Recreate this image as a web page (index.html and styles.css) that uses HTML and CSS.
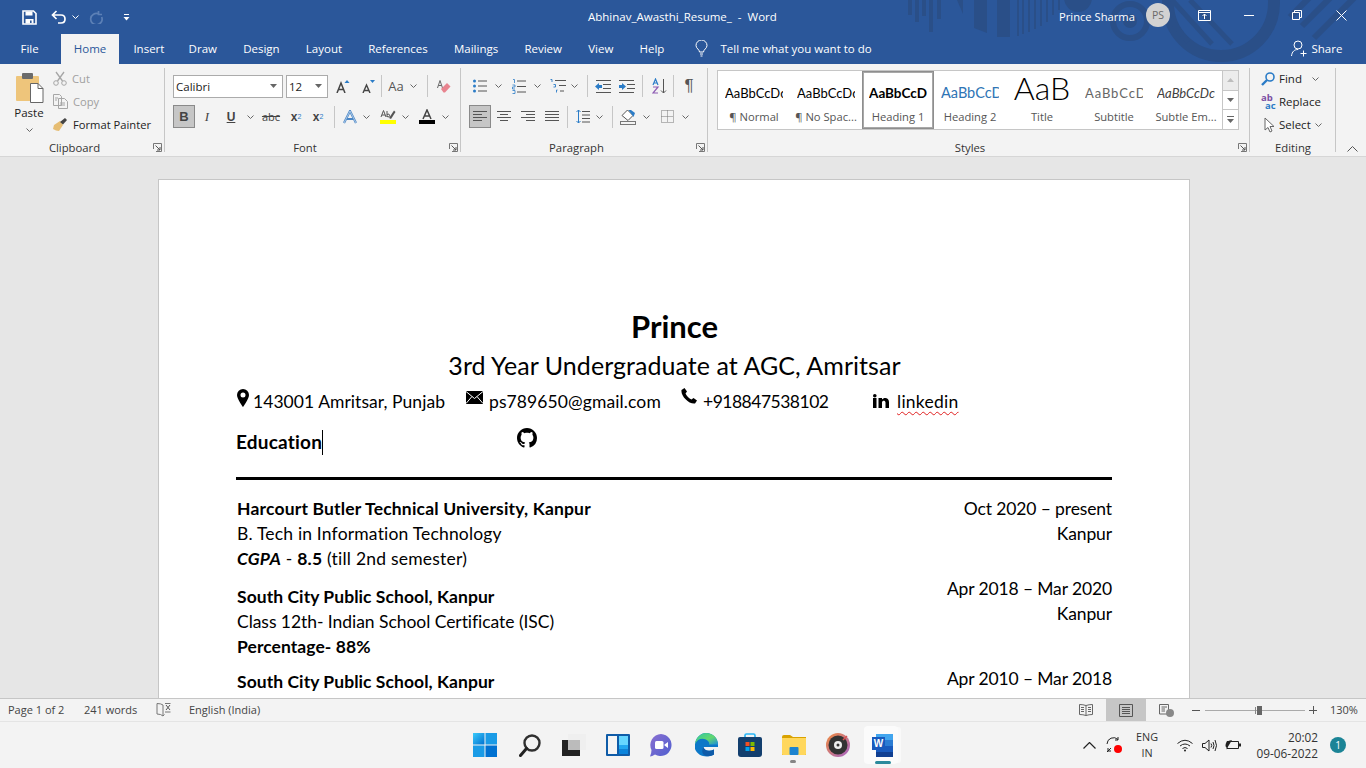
FILE: index.html
```html
<!DOCTYPE html>
<html lang="en">
<head>
<meta charset="utf-8">
<title>Abhinav_Awasthi_Resume_ - Word</title>
<link rel="stylesheet" href="styles.css">
</head>
<body>
<svg class="defs" width="0" height="0">
  <defs>
    <symbol id="chev" viewBox="0 0 7 4"><path d="M.5.5 3.5 3.5 6.5.5" fill="none" stroke="#666" stroke-width="1"/></symbol>
    <symbol id="launch" viewBox="0 0 9 9"><path d="M.5 6V.5H8.5V8.5H3" fill="none" stroke="#777"/><path d="M2.5 2.5 7 7M7 4V7H4" fill="none" stroke="#555"/></symbol>
    <linearGradient id="winG" x1="0" y1="0" x2="1" y2="1"><stop offset="0" stop-color="#3bcbfb"/><stop offset="1" stop-color="#0071d1"/></linearGradient>
    <linearGradient id="edgeG" x1="0" y1="0" x2="1" y2="1"><stop offset="0" stop-color="#2fc7a5"/><stop offset=".55" stop-color="#63d86f"/><stop offset="1" stop-color="#1d8ed8"/></linearGradient>
    <linearGradient id="chatG" x1="0" y1="0" x2="1" y2="1"><stop offset="0" stop-color="#8a6fd1"/><stop offset="1" stop-color="#4f5fcf"/></linearGradient>
    <linearGradient id="discG" x1="0" y1="0" x2="1" y2="1"><stop offset="0" stop-color="#f08a3c"/><stop offset="1" stop-color="#a565c9"/></linearGradient>
  </defs>
</svg>

<header class="titlebar">
  <svg class="pattern" width="1366" height="64" viewBox="0 0 1366 64">
    <g fill="#2a4f88">
      <rect x="908" width="4" height="15"/><rect x="915" width="4" height="22"/><rect x="922" width="4" height="16"/><rect x="929" width="4" height="32"/><rect x="937" width="4" height="19"/>
      <path d="M957 0H963V14Z"/><path d="M974 0H987V33L974 28Z"/><rect x="997" width="13" height="37"/>
      <rect x="1017" width="2" height="36"/><rect x="1022" width="2" height="34"/><rect x="1028" width="2" height="32"/><rect x="1034" width="2" height="29"/><rect x="1040" width="2" height="26"/><rect x="1046" width="2" height="22"/><rect x="1052" width="2" height="15"/><rect x="1058" width="2" height="10"/>
      <circle cx="1078" cy="-2" r="14"/><circle cx="1130" cy="21" r="7"/>
    </g>
    <g fill="none" stroke="#2a4f88">
      <circle cx="1130" cy="21" r="17" stroke-width="6"/>
      <circle cx="1221" cy="3" r="53" stroke-width="12"/>
      <path d="M1172 0 1212 44M1164 12 1188 42M1190 0 1232 44" stroke-width="5"/>
      <path d="M1290 17 1312 -5M1302 26 1338 -10M1314 38 1366 -14" stroke-width="6"/>
    </g>
  </svg>
  <div class="titlerow">
    <div class="qat">
      <svg class="q-save" width="15" height="15" viewBox="0 0 15 15"><path d="M1 1H11.5L14 3.5V14H1Z" fill="none" stroke="#fff" stroke-width="1.6"/><path d="M3.5 1.5H10.5V5.5H3.500ZM3.500 9H11.500V13.500H3.500Z" fill="#fff"/><rect x="8" y="10.500" width="1.600" height="2.500" fill="#2b579a"/></svg>
      <svg class="q-undo" width="15" height="14" viewBox="0 0 15 14"><path d="M5.500 1 1.500 5 5.500 9M1.500 5H10Q14 5 14 9T10 13H7" fill="none" stroke="#fff" stroke-width="1.700"/></svg>
      <svg class="q-chev" width="7" height="4"><use href="#chev"/></svg>
      <svg class="q-redo" width="14" height="14" viewBox="0 0 14 14"><path d="M9.500 1 9.500 4.500 13 4.500M9.500 3.800A5.700 5.700 0 1 0 12.700 7" fill="none" stroke="#5c80b6" stroke-width="1.700"/></svg>
      <svg class="q-more" width="7" height="7" viewBox="0 0 7 7"><path d="M1 .5H6" stroke="#fff"/><path d="M.5 3H6.500L3.500 6.500Z" fill="#fff"/></svg>
    </div>
    <div class="doctitle">Abhinav_Awasthi_Resume_&nbsp; -&nbsp; Word</div>
    <div class="account">
      <span class="username">Prince Sharma</span>
      <span class="avatar">PS</span>
      <svg class="win-ribbon" width="13" height="11" viewBox="0 0 13 11"><path d="M.5 .5H12.500V10.500H.500ZM.5 2.500H12.500" fill="none" stroke="#fff"/><path d="M6.500 9V4M4.500 6 6.500 4 8.500 6" fill="none" stroke="#fff"/></svg>
      <svg class="win-min" width="10" height="1"><rect width="10" height="1" fill="#fff"/></svg>
      <svg class="win-max" width="10" height="10" viewBox="0 0 10 10"><path d="M.5 2.500H7.500V9.500H.500ZM2.500 2.500V.5H9.500V7.500H7.500" fill="none" stroke="#fff"/></svg>
      <svg class="win-close" width="11" height="11" viewBox="0 0 11 11"><path d="M.5 .5 10.500 10.500M10.500 .5 .5 10.500" stroke="#fff"/></svg>
    </div>
  </div>
  <nav class="tabs">
    <span class="tab tab-file">File</span>
    <span class="tab tab-on">Home</span>
    <span class="tab tab-insert">Insert</span>
    <span class="tab">Draw</span>
    <span class="tab">Design</span>
    <span class="tab">Layout</span>
    <span class="tab">References</span>
    <span class="tab">Mailings</span>
    <span class="tab">Review</span>
    <span class="tab">View</span>
    <span class="tab">Help</span>
    <svg class="bulb" width="13" height="17" viewBox="0 0 13 17"><path d="M4.500 12C4.500 9.500 1 8.500 1 5.500A5.500 5.500 0 0 1 12 5.500C12 8.500 8.500 9.500 8.500 12ZM5 14H8M5.500 16H7.500" fill="none" stroke="#fff"/></svg>
    <span class="tellme">Tell me what you want to do</span>
    <span class="share">
      <svg width="16" height="17" viewBox="0 0 16 17"><circle cx="7" cy="5" r="4" fill="none" stroke="#fff"/><path d="M.5 16C1 11.500 3.500 9.500 7 9.500M9.500 13.500H15.500M12.500 10.500V16.500" fill="none" stroke="#fff"/></svg>
      Share
    </span>
  </nav>
</header>

<section class="ribbon">
  <div class="group g-clip">
    <div class="clipbody">
      <div class="paste">
        <svg width="29" height="31" viewBox="0 0 29 31"><rect x="1" y="4" width="23" height="25" rx="1" fill="#eec57b"/><rect x="7" y="1" width="11" height="6" rx="1" fill="#6b6b6b"/><path d="M15.500 11.500H23L28 16.500V30.500H15.500Z" fill="#fff" stroke="#666"/><path d="M23 11.500V16.500H28" fill="none" stroke="#666"/></svg>
        <span class="pastelabel">Paste</span>
        <svg width="7" height="4"><use href="#chev"/></svg>
      </div>
      <div class="cliplist">
        <div class="tool off">
          <svg class="tic" width="14" height="15" viewBox="0 0 14 15"><path d="M3 1 9.500 10M11 1 4.500 10" fill="none" stroke="#a6a6a6" stroke-width="1.300"/><circle cx="3" cy="12" r="2.300" fill="none" stroke="#a6a6a6"/><circle cx="11" cy="12" r="2.300" fill="none" stroke="#a6a6a6"/></svg>
          Cut
        </div>
        <div class="tool off">
          <svg class="tic" width="15" height="15" viewBox="0 0 15 15"><path d="M.5 .5H6.500L8.500 2.500V11.500H.500ZM5.500 4.500H11.500L14.500 7.500V14.500H5.500ZM2 4H5M2 6H4M7 9H12M7 11H12" fill="none" stroke="#a6a6a6"/></svg>
          Copy
        </div>
        <div class="tool">
          <svg class="tic" width="15" height="15" viewBox="0 0 15 15"><path d="M1 8 7 4 10 8 6 14Q3 14 0 12Z" fill="#e6bd73"/><path d="M7 5 12 1 14 3 10 7.500Z" fill="#444"/></svg>
          Format Painter
        </div>
      </div>
    </div>
    <div class="glabel">Clipboard</div>
    <svg class="launcher" width="9" height="9"><use href="#launch"/></svg>
  </div>

  <div class="group g-font">
    <div class="gbody">
      <div class="row">
        <div class="combo w110"><span>Calibri</span><svg class="tri" width="7" height="4"><path d="M0 0H7L3.500 4Z" fill="#666"/></svg></div>
        <div class="combo w42 ml3"><span>12</span><svg class="tri" width="7" height="4"><path d="M0 0H7L3.500 4Z" fill="#666"/></svg></div>
        <span class="c w30"><svg width="14" height="13" viewBox="0 0 14 13"><path d="M1 13 5 3 9 13M2.500 9.500H7.500" fill="none" stroke="#444" stroke-width="1.500"/><path d="M8.500 3 11 0 13.500 3Z" fill="#2b7cc7"/></svg></span>
        <span class="c w20"><svg width="13" height="13" viewBox="0 0 13 13"><path d="M1 13 4.500 5 8 13M2 10.500H7" fill="none" stroke="#444" stroke-width="1.400"/><path d="M8 0H13L10.500 3Z" fill="#2b7cc7"/></svg></span>
        <span class="c w6"><i class="sep"></i></span>
        <span class="c w24 aa">Aa</span>
        <span class="c w10"><svg width="7" height="4"><use href="#chev"/></svg></span>
        <span class="c w18"><i class="sep"></i></span>
        <span class="c w14"><svg width="15" height="15" viewBox="0 0 15 15"><path d="M1.500 9 4 1.500 6.500 9M2.500 6.500H5.500" fill="none" stroke="#666"/><path d="M5 10 11 4 14.500 7.500 9 13.500H7.500Z" fill="#e8848f"/></svg></span>
      </div>
      <div class="row row2">
        <span class="c w22 pressed bold-b">B</span>
        <span class="c w24 ital-i">I</span>
        <span class="c w24 under-u">U</span>
        <span class="c w14"><svg width="7" height="4"><use href="#chev"/></svg></span>
        <span class="c w28 strike-abc">abc</span>
        <span class="c w22 sub-x">x<sub>2</sub></span>
        <span class="c w22 sub-x">x<sup>2</sup></span>
        <span class="c w11"><i class="sep"></i></span>
        <span class="c w20"><svg width="14" height="14" viewBox="0 0 14 14"><path d="M1 13 7 1 13 13M3.500 9H10.500" fill="none" stroke="#4a86c5" stroke-width="2.200"/><path d="M1 13 7 1 13 13" fill="none" stroke="#d6e5f5" stroke-width=".7"/></svg></span>
        <span class="c w12"><svg width="7" height="4"><use href="#chev"/></svg></span>
        <span class="c w6"></span>
        <span class="c w20"><svg width="16" height="15" viewBox="0 0 16 15"><path d="M1 8 3.500 1.500 6 8M2 6H5M7 2V8M7 5.500Q9.500 4 9.500 6.500T7 7.500" fill="none" stroke="#555"/><path d="M9 9 14 1.500 15.500 3 11 10Z" fill="#555"/><rect y="11" width="16" height="4" fill="#ffff00"/></svg></span>
        <span class="c w14"><svg width="7" height="4"><use href="#chev"/></svg></span>
        <span class="c w30"><svg width="16" height="15" viewBox="0 0 16 15"><path d="M4 10 8 1 12 10M5.500 7H10.500" fill="none" stroke="#444" stroke-width="1.500"/><rect y="11" width="16" height="4" fill="#000"/></svg></span>
        <span class="c w6"><svg class="fix" width="7" height="4"><use href="#chev"/></svg></span>
      </div>
    </div>
    <div class="glabel">Font</div>
    <svg class="launcher" width="9" height="9"><use href="#launch"/></svg>
  </div>

  <div class="group g-para">
    <div class="gbody">
      <div class="row">
        <span class="c w22"><svg width="14" height="14" viewBox="0 0 14 14"><circle cx="1.500" cy="2" r="1.500" fill="#2b7cc7"/><circle cx="1.500" cy="7" r="1.500" fill="#2b7cc7"/><circle cx="1.500" cy="12" r="1.500" fill="#2b7cc7"/><path d="M5 2H14M5 7H14M5 12H14" stroke="#555"/></svg></span>
        <span class="c w14"><svg width="7" height="4"><use href="#chev"/></svg></span>
        <span class="c w28"><svg width="14" height="15" viewBox="0 0 14 15"><path d="M1 .5H2.500V4M.5 6H3V8H.5V10H3M.5 11.500H3V14.500H.5" fill="none" stroke="#2b7cc7" stroke-width=".8"/><path d="M5 2H14M5 7.500H14M5 13H14" stroke="#555"/></svg></span>
        <span class="c w8"><svg class="fix" width="7" height="4"><use href="#chev"/></svg></span>
        <span class="c w9"></span>
        <span class="c w16"><svg width="16" height="14" viewBox="0 0 16 14"><path d="M.5 .5H2V3M3.500 5.500H5.500V8H3.500M7.500 11H6.500V13.500" fill="none" stroke="#2b7cc7" stroke-width=".9"/><path d="M5 1.500H16M9 6.500H16M10 12H14" stroke="#555"/></svg></span>
        <span class="c w16"><svg width="7" height="4"><use href="#chev"/></svg></span>
        <span class="c w10"><i class="sep"></i></span>
        <span class="c w22"><svg width="16" height="13" viewBox="0 0 16 13"><path d="M1 .5H16M8 4.500H16M8 8.500H16M1 12.500H16" stroke="#555"/><path d="M0 6.500 4 3V5H7V8H4V10Z" fill="#2b7cc7"/></svg></span>
        <span class="c w26"><svg width="16" height="13" viewBox="0 0 16 13"><path d="M0 .5H15M0 12.500H15M8 4.500H16M8 8.500H16" stroke="#555"/><path d="M7 6.500 3 3V5H0V8H3V10Z" fill="#2b7cc7"/></svg></span>
        <span class="c w4"><i class="sep"></i></span>
        <span class="c w4"></span>
        <span class="c w22"><svg width="15" height="16" viewBox="0 0 15 16"><path d="M1 7 3.500 1 6 7M1.800 5H5.200" fill="none" stroke="#2b7cc7" stroke-width="1.200"/><path d="M1 9H6L1 15H6" fill="none" stroke="#8e5cb3" stroke-width="1.200"/><path d="M11.500 1V15M9 12.500 11.500 15 14 12.500" fill="none" stroke="#555"/></svg></span>
        <span class="c w6"><i class="sep"></i></span>
        <span class="c w26 pilcrow">¶</span>
      </div>
      <div class="row row2">
        <span class="c w22 pressed"><svg width="14" height="11" viewBox="0 0 14 11"><path d="M0 .5H14M0 3.500H9M0 6.500H14M0 9.500H9" stroke="#555"/></svg></span>
        <span class="c w26"><svg width="14" height="11" viewBox="0 0 14 11"><path d="M0 .5H14M3 3.500H11M0 6.500H14M3 9.500H11" stroke="#555"/></svg></span>
        <span class="c w22"><svg width="14" height="11" viewBox="0 0 14 11"><path d="M0 .5H14M5 3.500H14M0 6.500H14M5 9.500H14" stroke="#555"/></svg></span>
        <span class="c w26"><svg width="14" height="11" viewBox="0 0 14 11"><path d="M0 .5H14M0 3.500H14M0 6.500H14M0 9.500H14" stroke="#555"/></svg></span>
        <span class="c w4"><i class="sep"></i></span>
        <span class="c w28"><svg width="14" height="15" viewBox="0 0 14 15"><path d="M6 2.500H14M6 6H14M6 9.500H14M6 13H14" stroke="#555"/><path d="M2.500 1V14M.5 3 2.500 1 4.500 3M.5 12 2.500 14 4.500 12" fill="none" stroke="#2b7cc7"/></svg></span>
        <span class="c w4"><svg class="fix" width="7" height="4"><use href="#chev"/></svg></span>
        <span class="c w9"></span>
        <span class="c w4"><i class="sep"></i></span>
        <span class="c w28"><svg width="17" height="16" viewBox="0 0 17 16"><path d="M2 6.500 7.500 1 13 6.500 8 11.500Z" fill="#fff" stroke="#555"/><path d="M8.500 1 11 1 15 4 13.500 8Z" fill="#2b7cc7"/><rect x=".5" y="12.500" width="15" height="3" fill="none" stroke="#777"/></svg></span>
        <span class="c w8"><svg class="fix" width="7" height="4"><use href="#chev"/></svg></span>
        <span class="c w6"></span>
        <span class="c w22"><svg width="13" height="13" viewBox="0 0 13 13"><path d="M.5 .5H12.500V12.500H.500ZM6.500 .5V12.500M.5 6.500H12.500" fill="none" stroke="#777" stroke-dasharray="1 1"/></svg></span>
        <span class="c w14"><svg width="7" height="4"><use href="#chev"/></svg></span>
      </div>
    </div>
    <div class="glabel">Paragraph</div>
    <svg class="launcher" width="9" height="9"><use href="#launch"/></svg>
  </div>

  <div class="group g-styles">
    <div class="gallery">
      <div class="style"><span class="sample">AaBbCcDc</span><span class="stylename">¶ Normal</span></div>
      <div class="style"><span class="sample">AaBbCcDc</span><span class="stylename">¶ No Spac...</span></div>
      <div class="style style-on"><span class="sample s-h1">AaBbCcD</span><span class="stylename">Heading 1</span></div>
      <div class="style"><span class="sample s-h2">AaBbCcD</span><span class="stylename">Heading 2</span></div>
      <div class="style"><span class="sample s-title">AaB</span><span class="stylename">Title</span></div>
      <div class="style"><span class="sample s-sub">AaBbCcD</span><span class="stylename">Subtitle</span></div>
      <div class="style"><span class="sample s-em">AaBbCcDc</span><span class="stylename">Subtle Em...</span></div>
      <div class="gscroll">
        <span class="gbtn gbtn-up"><svg width="7" height="4"><path d="M0 4H7L3.500 0Z" fill="#bdbdbd"/></svg></span>
        <span class="gbtn"><svg width="7" height="4"><path d="M0 0H7L3.500 4Z" fill="#666"/></svg></span>
        <span class="gbtn"><svg width="7" height="7" viewBox="0 0 7 7"><path d="M0 .5H7" stroke="#666"/><path d="M0 3H7L3.500 7Z" fill="#666"/></svg></span>
      </div>
    </div>
    <div class="glabel">Styles</div>
    <svg class="launcher" width="9" height="9"><use href="#launch"/></svg>
  </div>

  <div class="group g-edit">
    <div class="editlist">
      <div class="etool">
        <span class="eic"><svg class="i-find" width="14" height="14" viewBox="0 0 14 14"><circle cx="9" cy="5" r="4" fill="none" stroke="#2b7cc7" stroke-width="1.600"/><path d="M1 13 6 8" stroke="#2b7cc7" stroke-width="2.400"/></svg></span>
        Find <svg class="echev" width="7" height="4"><use href="#chev"/></svg>
      </div>
      <div class="etool">
        <span class="eic rep"><span class="rep-ab">ab</span><span class="rep-ac">ac</span></span>
        Replace
      </div>
      <div class="etool">
        <span class="eic"><svg width="11" height="16" viewBox="0 0 11 16"><path d="M1 1V13L4 10.500 6 15 8 14 6 9.500H10Z" fill="#fff" stroke="#666"/></svg></span>
        Select <svg class="echev2" width="7" height="4"><use href="#chev"/></svg>
      </div>
    </div>
    <div class="glabel">Editing</div>
  </div>
  <svg class="collapse" width="11" height="6" viewBox="0 0 11 6"><path d="M.5 5.500 5.500 .5 10.500 5.500" fill="none" stroke="#555"/></svg>
</section>

<main class="docarea">
  <article class="page">
    <h1 class="name">Prince</h1>
    <p class="headline">3rd Year Undergraduate at AGC, Amritsar</p>
    <div class="contact">
      <span class="ci ci-addr">
        <svg class="i-pin" width="12" height="18" viewBox="0 0 12 18"><path fill-rule="evenodd" d="M6 0A6 6 0 0 0 0 6C0 10 6 18 6 18S12 10 12 6A6 6 0 0 0 6 0ZM6 3.500A2.500 2.500 0 1 1 6 8.500 2.500 2.500 0 0 1 6 3.500Z" fill="#000"/></svg>
        143001 Amritsar, Punjab
      </span>
      <span class="ci ci-mail">
        <svg class="i-mail" width="17" height="13" viewBox="0 0 17 13"><rect width="17" height="13" fill="#000"/><path d="M0 .5 8.500 7.500 17 .5M0 12.500 6 5.500M17 12.500 11 5.500" fill="none" stroke="#fff"/></svg>
        ps789650@gmail.com
      </span>
      <span class="ci ci-phone">
        <svg class="i-phone" width="16" height="16" viewBox="0 0 16 16"><path d="M3.500 0 6 3.500 4.500 5.500C5.500 8 8 10.500 10.500 11.500L12.500 10 16 12.500 14 15.500C8 16.500 -.5 8 .5 2Z" fill="#000"/></svg>
        +918847538102
      </span>
      <span class="ci ci-in">
        <svg class="i-in" width="16" height="14" viewBox="0 0 16 14"><rect y="4" width="3.500" height="10" fill="#000"/><circle cx="1.800" cy="1.800" r="1.800" fill="#000"/><path d="M5.500 4H9V5.500C10.500 3.300 16 3 16 8V14H12.500V8.500C12.500 6 9 6 9 8.500V14H5.500Z" fill="#000"/></svg>
        <span class="squiggle">linkedin</span>
      </span>
    </div>
    <div class="sectionrow">
      <h2 class="section">Education</h2><i class="caret"></i>
      <svg class="i-gh" width="20" height="20" viewBox="0 0 16 16"><path fill="#000" d="M8 0C3.580 0 0 3.580 0 8c0 3.540 2.290 6.530 5.470 7.590.4.070.55-.17.55-.38 0-.19-.01-.82-.01-1.490-2.010.37-2.530-.49-2.690-.94-.09-.23-.48-.94-.82-1.130-.28-.15-.68-.52-.01-.53.63-.01 1.080.58 1.230.82.72 1.210 1.870.87 2.330.66.070-.52.28-.87.51-1.070-1.780-.2-3.640-.89-3.640-3.950 0-.87.31-1.590.82-2.150-.08-.2-.36-1.020.08-2.120 0 0 .67-.21 2.200.82.64-.18 1.320-.27 2-.27.68 0 1.360.09 2 .27 1.530-1.040 2.200-.82 2.200-.82.44 1.100.16 1.920.08 2.120.51.56.82 1.270.82 2.150 0 3.070-1.870 3.750-3.650 3.950.29.25.54.73.54 1.480 0 1.070-.01 1.930-.01 2.200 0 .21.15.46.55.38A8.013 8.013 0 0016 8c0-4.420-3.580-8-8-8z"/></svg>
    </div>
    <hr class="rule">
    <div class="entry e1">
      <div class="left">
        <div><b>Harcourt Butler Technical University, Kanpur</b></div>
        <div>B. Tech in Information Technology</div>
        <div class="cgpa"><b><i>CGPA</i></b> - <b>8.5</b> (till 2nd semester)</div>
      </div>
      <div class="right">
        <div>Oct 2020 – present</div>
        <div>Kanpur</div>
      </div>
    </div>
    <div class="entry e2">
      <div class="left">
        <div class="tight"><b>South City Public School, Kanpur</b></div>
        <div class="tighter">Class 12th- Indian School Certificate (ISC)</div>
        <div class="tight"><b>Percentage- 88%</b></div>
      </div>
      <div class="right up8">
        <div>Apr 2018 – Mar 2020</div>
        <div>Kanpur</div>
      </div>
    </div>
    <div class="entry e3">
      <div class="left">
        <div class="tight"><b>South City Public School, Kanpur</b></div>
      </div>
      <div class="right up3">
        <div>Apr 2010 – Mar 2018</div>
      </div>
    </div>
  </article>
</main>

<footer class="statusbar">
  <span class="st st-page">Page 1 of 2</span>
  <span class="st st-words">241 words</span>
  <svg class="st-proof" width="15" height="14" viewBox="0 0 15 14"><path d="M7 2Q5 .5 1 .5V11Q5 11 7 13V2ZM7 13 8.500 11.500" fill="none" stroke="#777"/><path d="M10 2 14 7M14 2 10 7" stroke="#555"/><path d="M9 .5H14.500M9 9H14.500" stroke="#777"/></svg>
  <span class="st st-lang">English (India)</span>
  <span class="st-right">
    <span class="view"><svg width="14" height="12" viewBox="0 0 14 12"><path d="M7 1.500Q4 .5 .5 .5V10.500Q4 10.500 7 11.500 10 10.500 13.500 10.500V.5Q10 .5 7 1.500ZM7 1.500V11.500M2 3.500H5M2 5.500H5M2 7.500H5M9 3.500H12M9 5.500H12M9 7.500H12" fill="none" stroke="#666"/></svg></span>
    <span class="view view-on"><svg width="14" height="13" viewBox="0 0 14 13"><path d="M.5 .5H13.500V12.500H.500ZM3 3.500H11M3 5.500H11M3 7.500H11M3 9.500H11" fill="none" stroke="#555"/></svg></span>
    <span class="view"><svg width="15" height="13" viewBox="0 0 15 13"><path d="M.5 .5H9.500V10H.500ZM2.500 3H8M2.500 5H6M2.500 7H6" fill="none" stroke="#666"/><circle cx="11" cy="9" r="4" fill="#888"/></svg></span>
    <span class="zoomminus"></span>
    <span class="slider"><i class="tick"></i><i class="thumb"></i></span>
    <span class="zoomplus"></span>
    <span class="zoomval">130%</span>
  </span>
</footer>

<div class="taskbar">
  <div class="apps">
    <span class="app"><svg width="24" height="24" viewBox="0 0 24 24"><rect width="11.500" height="11.500" fill="url(#winG)"/><rect x="12.500" width="11.500" height="11.500" fill="#1a9be6"/><rect y="12.500" width="11.500" height="11.500" fill="#1a9be6"/><rect x="12.500" y="12.500" width="11.500" height="11.500" fill="#0071d1"/></svg></span>
    <span class="app a2"><svg width="22" height="23" viewBox="0 0 22 23"><circle cx="13" cy="9" r="7.500" fill="none" stroke="#2f2f2f" stroke-width="2.400"/><path d="M7.500 14.500 1.500 21.500" stroke="#222" stroke-width="3" stroke-linecap="round"/></svg></span>
    <span class="app a3"><svg width="24" height="22" viewBox="0 0 24 22"><rect y="6" width="18" height="16" fill="#222"/><rect x="6" width="18" height="16" fill="#eee" fill-opacity=".9"/><rect x="6" y="6" width="12" height="10" fill="#bbb"/></svg></span>
    <span class="app a4"><svg width="24" height="22" viewBox="0 0 24 22"><rect width="24" height="22" rx="1" fill="#0f5ca8"/><rect x="2" y="2" width="9" height="18" fill="#f5f5f5"/><rect x="13" y="2" width="9" height="9" fill="#66d6ff"/><rect x="13" y="11" width="9" height="4.500" fill="#22a7f0"/><rect x="13" y="15.500" width="9" height="4.500" fill="#0a84dc"/></svg></span>
    <span class="app a5"><svg width="24" height="24" viewBox="0 0 24 24"><path d="M12 1A11 11 0 1 1 6 21.500Q3 23.500 1 23.500 2.500 20 2.500 17A11 11 0 0 1 12 1Z" fill="url(#chatG)"/><rect x="6" y="8" width="8.500" height="8" rx="1.500" fill="#fff"/><path d="M15.500 11.500 19 9V15L15.500 12.500Z" fill="#fff"/></svg></span>
    <span class="app a6"><svg width="24" height="24" viewBox="0 0 24 24"><path d="M1 11C2 4 7 0 12 0 19 0 24 5 24 12V14H9.500C10 17.500 15 19 20 16.500V21.500C14 25 4 24 1 16Z" fill="#0c78c8"/><path d="M1 11C3 6 8 4.500 12 6.500 15 8 15.500 10 15 11.500H24C24 5 19 0 12 0 7 0 2 4 1 11Z" fill="url(#edgeG)"/><path d="M9.500 14C10 17.500 15 19 20 16.500V21.500C18 22.800 15 23.500 12 23 8.500 22 7 18 9.500 14Z" fill="#0f5ba8"/></svg></span>
    <span class="app a7"><svg width="24" height="24" viewBox="0 0 24 24"><path d="M7 5V2.500Q7 1 8.500 1H15.500Q17 1 17 2.500V5" fill="none" stroke="#29b6f6" stroke-width="1.700"/><path d="M0 6Q0 4 2 4H22Q24 4 24 6V21Q24 24 21 24H3Q0 24 0 21Z" fill="#133f6e"/><rect x="7.500" y="9" width="4" height="4" fill="#f25022"/><rect x="12.500" y="9" width="4" height="4" fill="#7fba00"/><rect x="7.500" y="14" width="4" height="4" fill="#00a4ef"/><rect x="12.500" y="14" width="4" height="4" fill="#ffb900"/></svg></span>
    <span class="app a8"><svg width="24" height="22" viewBox="0 0 24 22"><path d="M0 3Q0 1 2 1H8L11 3H24V21H0Z" fill="#d9a200"/><path d="M0 4H24V20Q24 21 23 21H1Q0 21 0 20Z" fill="#ffd75c"/><rect x="7.500" y="13" width="9" height="8" rx="1" fill="#1d84cf"/></svg><i class="dot"></i></span>
    <span class="app a9"><svg width="24" height="24" viewBox="0 0 24 24"><circle cx="12" cy="12" r="12" fill="url(#discG)"/><circle cx="12" cy="12" r="9.500" fill="#333"/><circle cx="12" cy="12" r="4" fill="#eee"/><circle cx="12" cy="12" r="1.500" fill="#333"/><path d="M17 7 21 3" stroke="#d9534f" stroke-width="1.500"/></svg></span>
    <span class="app app-on"><svg width="24" height="23" viewBox="0 0 24 23"><rect x="7" y="0" width="17" height="6" fill="#41a5ee"/><rect x="7" y="6" width="17" height="6" fill="#2b7cd3"/><rect x="7" y="12" width="17" height="6" fill="#185abd"/><rect x="7" y="18" width="17" height="5" fill="#103f91"/></svg><b class="wbadge">W</b><i class="dash"></i></span>
  </div>
  <div class="tray">
    <svg class="t-caret" width="13" height="7" viewBox="0 0 13 7"><path d="M.5 6.500 6.500 .5 12.500 6.500" fill="none" stroke="#222" stroke-width="1.200"/></svg>
    <svg class="t-sync" width="17" height="17" viewBox="0 0 17 17"><path d="M1 7A6.500 6.500 0 0 1 12 2.500M12 0V3H9M2 11V14H5M1 15 5 11" fill="none" stroke="#222"/><circle cx="12" cy="12" r="4" fill="#fe0000"/></svg>
    <span class="t-lang"><span>ENG</span><span>IN</span></span>
    <svg class="t-wifi" width="16" height="13" viewBox="0 0 16 13"><path d="M.5 4.500Q8 -2 15.500 4.500M3 7Q8 3 13 7M5.500 9.500Q8 7.500 10.500 9.500" fill="none" stroke="#222"/><circle cx="8" cy="11.500" r="1" fill="#222"/></svg>
    <svg class="t-vol" width="16" height="13" viewBox="0 0 16 13"><path d="M.5 4.500H3L7 1V12L3 8.500H.500ZM9 4.500Q10.500 6.500 9 8.500M11 3Q13 6.500 11 10M13 1Q16 6.500 13 12" fill="none" stroke="#222"/></svg>
    <svg class="t-batt" width="16" height="12" viewBox="0 0 16 12"><path d="M2 2.500H13.500V9.500H2Z" fill="none" stroke="#222"/><rect x="14" y="4.500" width="2" height="3" fill="#222"/><path d="M1 11 7 1Q0 2 .5 7 .7 8 2 8.500" fill="#222"/></svg>
    <span class="t-clock"><span>20:02</span><span>09-06-2022</span></span>
    <span class="t-badge">1</span>
  </div>
</div>
</body>
</html>
```
FILE: styles.css
```css
* { box-sizing: border-box; }
html, body { margin: 0; padding: 0; }
body { width: 1366px; height: 768px; overflow: hidden; display: flex; flex-direction: column; font-family: "Open Sans", "Noto Sans", sans-serif; font-size: 11.5px; color: #333; background: #f3f3f3; }
.defs { position: absolute; }
svg { display: block; flex-shrink: 0; }

/* title bar */
.titlebar { position: relative; height: 64px; flex: none; background: #2b579a; color: #fff; }
.pattern { position: absolute; left: 0; top: 0; }
.titlerow { position: relative; height: 34px; display: flex; align-items: center; }
.qat { width: 588px; flex: none; display: flex; align-items: center; }
.q-save { margin-left: 22px; }
.q-undo { margin-left: 14px; }
.q-chev { margin-left: 6px; filter: brightness(3); }
.q-redo { margin-left: 10px; }
.q-more { margin-left: 20px; }
.doctitle { width: 471px; flex: none; white-space: nowrap; padding-bottom: 2px; }
.account { flex: 1; display: flex; align-items: center; }
.username { width: 87px; font-size: 11.2px; padding-bottom: 2px; }
.avatar { width: 24px; height: 24px; border-radius: 50%; background: #d2d2d2; color: #6a6a6a; font-size: 10.5px; display: flex; align-items: center; justify-content: center; margin-top: -5px; }
.account svg { margin-top: -4px; }
.win-ribbon { margin-left: 28px; }
.win-min { margin-left: 33px; }
.win-max { margin-left: 38px; }
.win-close { margin-left: 34px; }
.tabs { position: relative; height: 30px; display: flex; align-items: stretch; padding-left: 7px; }
.tab { display: flex; align-items: center; padding: 0 13.1px 2px; white-space: nowrap; }
.tab-file { margin-right: 9px; padding-left: 13.5px; }
.tab-on { background: #f3f3f3; color: #2b579a; padding: 0 13px 2px; margin: 0 1px 0 0; }
.tab-insert { margin-right: -2px; }
.bulb { align-self: center; margin-left: 18px; margin-top: -2px; }
.tellme { align-self: center; margin: -2px 0 0 12px; width: 571px; white-space: nowrap; }
.share { align-self: center; display: flex; align-items: center; gap: 4px; margin-top: -2px; }

/* ribbon */
.ribbon { position: relative; height: 93px; flex: none; display: flex; background: #f3f3f3; border-bottom: 1px solid #d6d6d6; }
.group { position: relative; flex: none; height: 92px; display: flex; flex-direction: column; }
.group::after { content: ""; position: absolute; right: 0; top: 4px; bottom: 4px; width: 1px; background: #c6c6c6; }
.g-clip { width: 165px; }
.g-font { width: 296px; }
.g-para { width: 247px; }
.g-styles { width: 542px; }
.g-edit { width: 86px; }
.gbody { height: 76px; padding: 10px 0 0 8px; display: flex; flex-direction: column; gap: 7px; }
.glabel { height: 16px; line-height: 16px; text-align: center; font-size: 11.3px; color: #333; padding-right: 16px; }
.launcher { position: absolute; right: 3px; bottom: 4px; }
.row { display: flex; align-items: center; height: 24px; }
.row2 { height: 23px; }
.c { display: flex; align-items: center; justify-content: center; height: 100%; flex: none; }
.w4 { width: 4px; } .w6 { width: 6px; } .w8 { width: 8px; } .w9 { width: 9px; } .w10 { width: 10px; } .w11 { width: 11px; } .w12 { width: 12px; } .w14 { width: 14px; } .w16 { width: 16px; } .w18 { width: 18px; } .w20 { width: 20px; } .w22 { width: 22px; } .w24 { width: 24px; } .w26 { width: 26px; } .w28 { width: 28px; } .w30 { width: 30px; }
.sep { display: block; width: 1px; height: 22px; background: #c6c6c6; flex: none; }
.pressed { background: #c6c6c6; border: 1px solid #8a8a8a; }
.combo { height: 23px; background: #fff; border: 1px solid #ababab; display: flex; align-items: center; justify-content: space-between; padding: 0 5px 0 2px; color: #222; }
.w110 { width: 110px; }
.w42 { width: 42px; }
.ml3 { margin-left: 3px; }
.aa { font-size: 13px; color: #555; }
.bold-b { font-weight: 700; color: #444; font-size: 13px; font-family: "Liberation Sans", sans-serif; }
.ital-i { font-style: italic; color: #444; font-size: 13px; font-family: "Liberation Serif", serif; }
.under-u { font-weight: 700; color: #444; text-decoration: underline; font-size: 12px; font-family: "Liberation Sans", sans-serif; }
.strike-abc { text-decoration: line-through; color: #444; font-size: 11px; }
.sub-x { font-weight: 700; color: #444; font-size: 12px; font-family: "Liberation Sans", sans-serif; }
.sub-x sub, .sub-x sup { font-size: 7px; color: #2b7cc7; font-weight: 400; line-height: 0; }
.pilcrow { font-size: 17px; color: #555; font-family: "Liberation Sans", sans-serif; }

.clipbody { height: 76px; display: flex; }
.paste { width: 52px; padding: 8px 0 0 6px; display: flex; flex-direction: column; align-items: center; flex: none; }
.pastelabel { margin: 1px 0 6px; line-height: 18px; color: #222; }
.cliplist { padding-top: 3px; }
.tool { height: 23.2px; display: flex; align-items: center; white-space: nowrap; color: #222; font-size: 11.2px; }
.tool.off { color: #a0a0a0; }
.tic { margin: 0 5px 0 1px; }

.gallery { height: 60px; margin: 6px 0 0 9px; width: 522px; background: #fff; border: 1px solid #c6c6c6; display: flex; flex: none; }
.g-styles .glabel { margin-top: 10px; padding-right: 18px; }
.style { width: 72px; flex: none; display: flex; flex-direction: column; align-items: center; padding-top: 5px; border: 2px solid transparent; }
.style-on { border-color: #a8a8a8; outline: 1px solid #8e8e8e; outline-offset: -1px; }
.sample { display: block; width: 58px; height: 30px; line-height: 30px; overflow: hidden; white-space: nowrap; font-family: "Lato", sans-serif; font-size: 13px; color: #000; }
.s-h1 { font-weight: 700; font-size: 13.5px; }
.s-h2 { color: #2e74b5; font-size: 14.5px; }
.s-title { font-size: 32px; line-height: 20px; font-weight: 300; text-align: center; }
.s-sub { color: #666; letter-spacing: .9px; }
.s-em { font-style: italic; color: #404040; }
.stylename { line-height: 16px; font-size: 11.2px; color: #555; white-space: nowrap; margin-top: 1px; }
.gscroll { width: 16px; margin-left: auto; display: flex; flex-direction: column; }
.gbtn { flex: 1; display: flex; align-items: center; justify-content: center; border-left: 1px solid #c6c6c6; border-top: 1px solid #c6c6c6; }
.gbtn-up { background: #ececec; border-top: 0; }

.editlist { height: 76px; padding: 3px 0 0 10px; }
.g-edit .glabel { padding-right: 0; }
.etool { height: 23.2px; display: flex; align-items: center; white-space: nowrap; color: #222; }
.eic { width: 19px; display: flex; justify-content: center; flex: none; }
.i-find { margin-left: -3px; }
.echev { margin-left: 10px; }
.echev2 { margin-left: 4px; }
.rep { flex-direction: column; line-height: 8px; font-size: 9.5px; font-weight: 700; height: 16px; align-items: flex-start; padding-left: 1px; }
.rep-ab { color: #7a4fa3; }
.rep-ac { color: #2b7cc7; margin-left: 4px; }
.collapse { position: absolute; right: 8px; top: 82px; }

/* document */
.docarea { flex: none; height: 541px; overflow: hidden; background: #e6e6e6; padding: 22px 0 0 158px; }
.page { width: 1032px; min-height: 800px; background: #fff; border: 1px solid #c6c6c6; padding: 126px 77px 0 78px; font-family: "Lato", "Carlito", sans-serif; font-size: 17.5px; line-height: 25px; color: #000; }
.name { margin: 0; height: 40px; line-height: 40px; text-align: center; font-size: 31px; font-weight: 700; }
.headline { margin: 0; height: 38px; line-height: 38px; text-align: center; font-size: 25px; letter-spacing: .05px; }
.contact { display: flex; align-items: flex-start; margin-top: 5px; height: 26px; line-height: 26px; white-space: nowrap; }
.ci { display: flex; flex: none; align-items: flex-start; }
.ci-addr { width: 229px; letter-spacing: .05px; }
.ci-mail { width: 215px; letter-spacing: .1px; }
.ci-phone { width: 192px; letter-spacing: -.5px; }
.ci-in { letter-spacing: .25px; }
.i-pin { margin: 0 4px 0 0; }
.i-mail { margin: 2px 6px 0 0; }
.i-phone { margin: -1px 6px 0 0; }
.i-in { margin: 5px 8px 0 0; }
.squiggle { text-decoration: underline wavy #e02020 1px; text-underline-offset: 3px; text-decoration-skip-ink: none; }
.sectionrow { display: flex; align-items: flex-start; margin: 13px 0 0 -1px; height: 28px; }
.section { margin: 0; font-size: 19px; line-height: 28px; font-weight: 700; letter-spacing: .2px; }
.caret { display: block; width: 1px; height: 25px; margin: 2px 0 0 0; background: #000; flex: none; }
.i-gh { margin: 0 0 0 194px; }
.rule { margin: 21px 0 0 -1px; border: 0; height: 3px; background: #000; }
.entry { display: flex; justify-content: space-between; align-items: flex-start; }
.e1 { margin-top: 16px; }
.e2 { margin-top: 13px; }
.e3 { margin-top: 10px; }
.left { letter-spacing: .18px; }
.cgpa { letter-spacing: .22px; }
.tight { letter-spacing: .06px; }
.tighter { letter-spacing: -.05px; }
.right { text-align: right; letter-spacing: -.13px; }
.up8 { margin-top: -8px; }
.up3 { margin-top: -3px; }

/* status bar */
.statusbar { flex: none; height: 23px; display: flex; align-items: center; background: #f3f3f3; border-top: 1px solid #c6c6c6; font-size: 11px; color: #444; padding-left: 8px; }
.st { white-space: nowrap; padding-bottom: 2px; }
.st-page { width: 76px; }
.st-words { width: 72px; }
.st-proof { margin-right: 18px; }
.st-lang { width: 877px; }
.st-right { display: flex; align-items: center; height: 22px; }
.view { width: 40px; height: 100%; display: flex; align-items: center; justify-content: center; }
.view-on { background: #c6c6c6; }
.zoomminus { width: 8px; height: 1px; background: #555; margin: 0 5px 0 6px; }
.slider { position: relative; width: 100px; height: 1px; background: #aaa; }
.tick { position: absolute; left: 50px; top: -3px; width: 1px; height: 7px; background: #888; }
.thumb { position: absolute; left: 52px; top: -4px; width: 5px; height: 9px; background: #666; }
.zoomplus { width: 8px; height: 8px; margin: 0 14px 0 4px; background: linear-gradient(#555, #555) center/8px 1px no-repeat, linear-gradient(#555, #555) center/1px 8px no-repeat; }
.zoomval { white-space: nowrap; padding-bottom: 2px; margin-left: -1px; }

/* taskbar */
.taskbar { flex: none; height: 47px; display: flex; align-items: center; background: #f3f3f3; border-top: 1px solid #e4e4e4; }
.apps { display: flex; align-items: center; width: 1075px; padding-left: 473px; flex: none; }
.app { position: relative; flex: none; display: flex; align-items: center; justify-content: center; }
.app:first-child { width: 24px; }
.a2 { margin-left: 22px; }
.a3 { margin-left: 21px; }
.a4 { margin-left: 20px; }
.a5 { margin-left: 19px; }
.a6 { margin-left: 21px; }
.a7 { margin-left: 20px; }
.a8 { margin-left: 20px; }
.a9 { margin-left: 20px; }
.dot { position: absolute; left: 8px; bottom: -7px; width: 6px; height: 3px; border-radius: 2px; background: #858585; }
.app-on { width: 34px; height: 38px; margin-left: 14px; border-radius: 4px; background: #fbfbfb; box-shadow: 4px 0 0 -1px #f9f9f9; }
.wbadge { position: absolute; left: 8px; top: 11px; width: 13px; height: 13px; background: #185abd; color: #fff; font: 700 10px/13px "Liberation Sans", sans-serif; text-align: center; }
.dash { position: absolute; left: 11px; bottom: 0; width: 16px; height: 3px; border-radius: 2px; background: #2a8a9c; }
.tray { flex: 1; display: flex; align-items: center; color: #333; }
.t-caret { margin-left: 8px; }
.t-sync { margin-left: 10px; }
.t-lang { width: 52px; margin-left: -2px; display: flex; flex-direction: column; align-items: center; font-size: 10.8px; line-height: 16px; }
.t-wifi { margin-left: 4px; }
.t-vol { margin-left: 9px; }
.t-batt { margin-left: 7px; }
.t-clock { width: 77px; display: flex; flex-direction: column; align-items: flex-end; font-size: 11.8px; line-height: 16px; }
.t-badge { width: 16px; height: 16px; margin-left: 12px; border-radius: 50%; background: #1b8496; color: #fff; font-size: 10px; display: flex; align-items: center; justify-content: center; }
```
